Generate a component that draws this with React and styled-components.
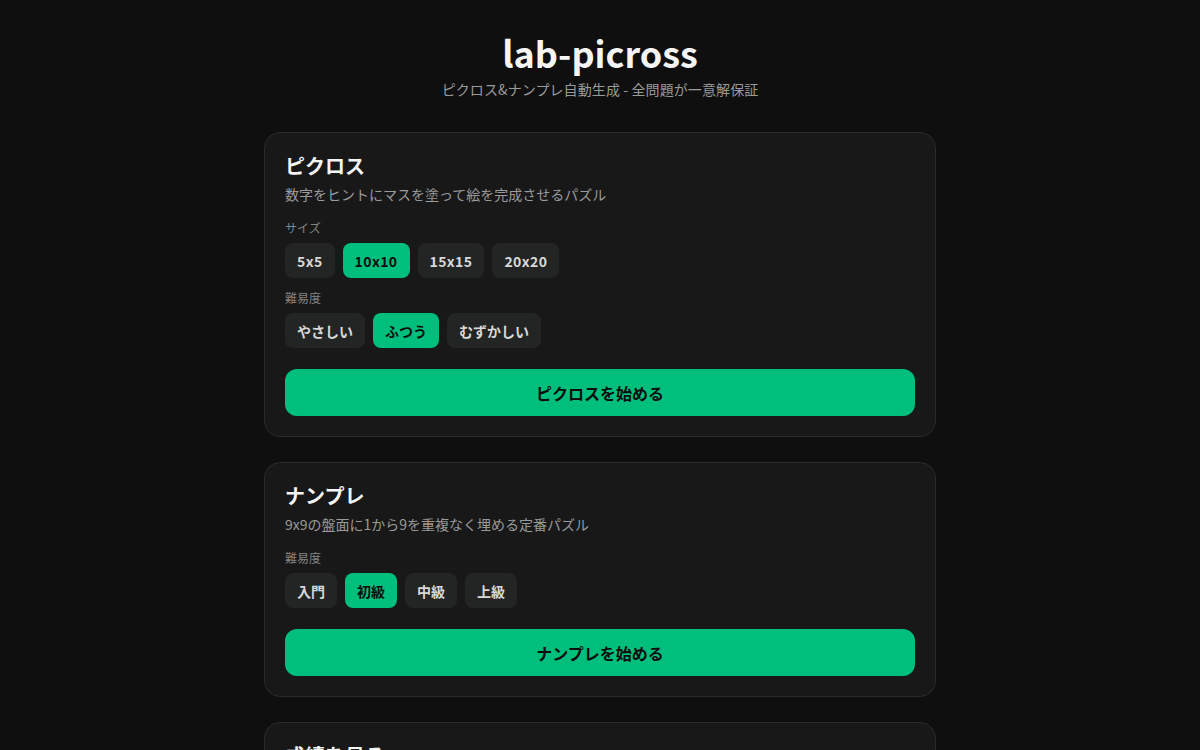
import React, { useState } from "react";
import styled, { createGlobalStyle } from "styled-components";

const Global = createGlobalStyle`
  * { box-sizing: border-box; }
  html, body { margin: 0; padding: 0; background: #0f0f0f; }
  body {
    font-family: "Noto Sans CJK JP", "Noto Sans", sans-serif;
    color: #f2f2f2;
  }
`;

const Page = styled.main`
  width: 672px;
  margin: 0 auto;
  padding: 28px 0 40px;
  display: flex;
  flex-direction: column;
  gap: 25px;
`;

const Header = styled.header`
  display: flex;
  flex-direction: column;
  align-items: center;
  gap: 3px;
  margin-bottom: 8px;
`;

const Title = styled.h1`
  margin: 0;
  font-size: 36px;
  line-height: 48px;
  font-weight: 700;
  color: #f5f5f5;
`;

const Subtitle = styled.p`
  margin: 0;
  font-size: 14px;
  line-height: 20px;
  letter-spacing: 0.1px;
  color: #9a9a9a;
`;

const Card = styled.section`
  background: #181818;
  border: 1px solid #2a2a2a;
  border-radius: 16px;
  padding: 20px;
  display: flex;
  flex-direction: column;
`;

const CardTitle = styled.h2`
  margin: 0 0 5px;
  font-size: 20px;
  line-height: 26px;
  font-weight: 700;
  color: #f5f5f5;
`;

const CardDesc = styled.p`
  margin: 0 0 16px;
  font-size: 14px;
  line-height: 20px;
  color: #9a9a9a;
`;

const Label = styled.div`
  font-size: 12px;
  line-height: 16px;
  color: #838383;
  margin-bottom: 7px;
`;

const Options = styled.div`
  display: flex;
  gap: 8px;
  margin-bottom: 12px;
`;

const Chip = styled.button`
  font-family: inherit;
  border: none;
  border-radius: 8px;
  height: 35px;
  padding: 0 12px;
  font-size: 14px;
  font-weight: 700;
  letter-spacing: ${(p) => (p.$numeric ? "0.4px" : "0")};
  cursor: pointer;
  background: ${(p) => (p.$active ? "#00bf7d" : "#232525")};
  color: ${(p) => (p.$active ? "#0e0e0e" : "#d8d8d8")};
`;

const StartButton = styled.button`
  font-family: inherit;
  margin-top: 9px;
  width: 100%;
  height: 47px;
  border: none;
  border-radius: 12px;
  background: #00bf7d;
  color: #0e0e0e;
  font-size: 16px;
  font-weight: 700;
  cursor: pointer;
`;

function OptionGroup({ label, items, value, onChange, numeric }) {
  return (
    <>
      <Label>{label}</Label>
      <Options>
        {items.map((it) => (
          <Chip
            key={it}
            $active={it === value}
            $numeric={numeric}
            onClick={() => onChange(it)}
          >
            {it}
          </Chip>
        ))}
      </Options>
    </>
  );
}

export default function App() {
  const [size, setSize] = useState("10x10");
  const [level, setLevel] = useState("ふつう");
  const [sudoku, setSudoku] = useState("初級");

  return (
    <>
      <Global />
      <Page>
        <Header>
          <Title>lab-picross</Title>
          <Subtitle>ピクロス&amp;ナンプレ自動生成 - 全問題が一意解保証</Subtitle>
        </Header>

        <Card>
          <CardTitle>ピクロス</CardTitle>
          <CardDesc>数字をヒントにマスを塗って絵を完成させるパズル</CardDesc>
          <OptionGroup
            label="サイズ"
            items={["5x5", "10x10", "15x15", "20x20"]}
            value={size}
            onChange={setSize}
            numeric
          />
          <OptionGroup
            label="難易度"
            items={["やさしい", "ふつう", "むずかしい"]}
            value={level}
            onChange={setLevel}
          />
          <StartButton>ピクロスを始める</StartButton>
        </Card>

        <Card>
          <CardTitle>ナンプレ</CardTitle>
          <CardDesc>9x9の盤面に1から9を重複なく埋める定番パズル</CardDesc>
          <OptionGroup
            label="難易度"
            items={["入門", "初級", "中級", "上級"]}
            value={sudoku}
            onChange={setSudoku}
          />
          <StartButton>ナンプレを始める</StartButton>
        </Card>

        <Card>
          <CardTitle>成績を見る</CardTitle>
          <CardDesc>これまでの記録を確認できます</CardDesc>
        </Card>
      </Page>
    </>
  );
}
